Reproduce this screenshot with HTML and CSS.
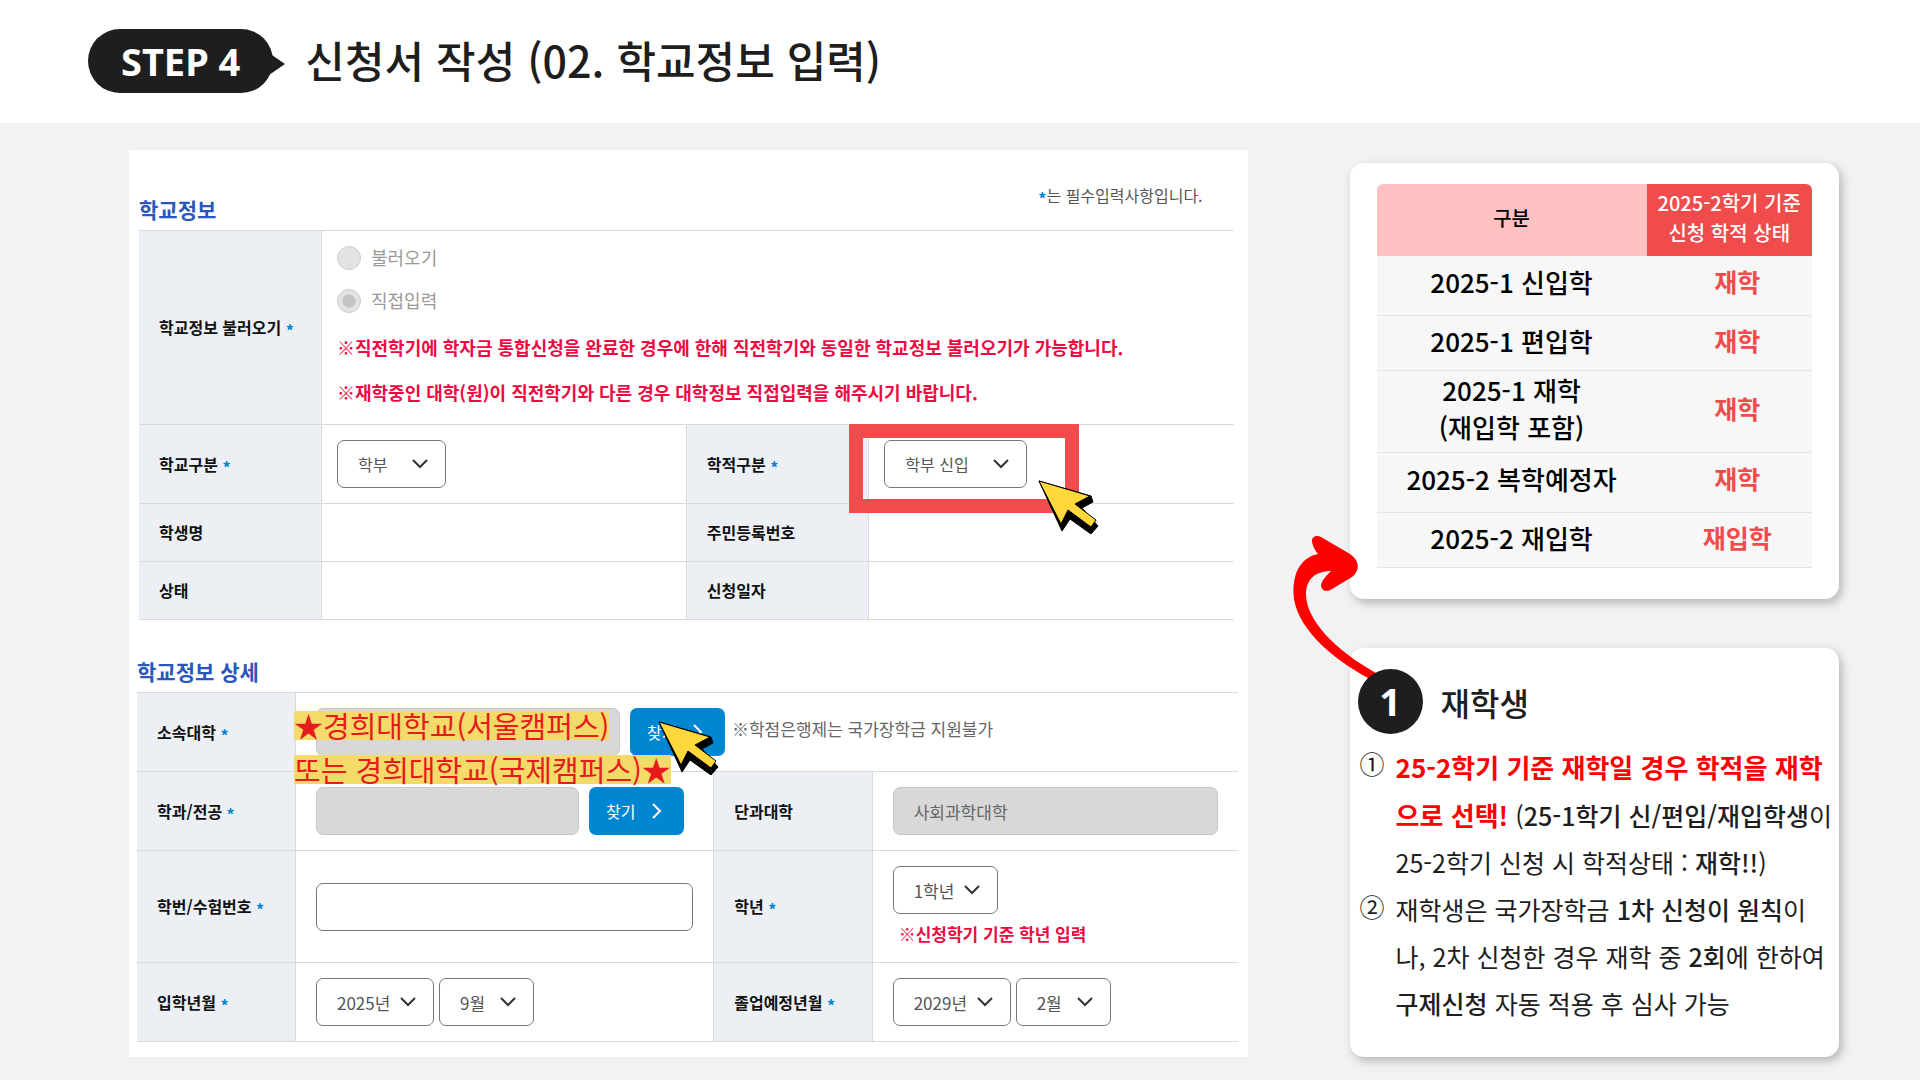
FILE: index.html
```html
<!DOCTYPE html>
<html lang="ko">
<head>
  <meta charset="UTF-8">
  <meta name="viewport" content="width=device-width, initial-scale=1.0">
  <title>신청서 작성 - 학교정보 입력</title>
  <link rel="stylesheet" href="styles.css">
</head>
<body>
  <header class="page-header">
    <span class="step">STEP 4</span>
    <h1>신청서 작성 (02. 학교정보 입력)</h1>
  </header>

  <main class="page-content">
    <form class="panel">
      <section class="school">
        <div class="section-head">
          <h2>학교정보</h2>
          <p class="required-note"><span class="req">*</span>는 필수입력사항입니다.</p>
        </div>
        <table class="form-table">
          <colgroup>
            <col class="col-label"><col class="col-value"><col class="col-label"><col class="col-value">
          </colgroup>
          <tr>
            <th scope="row">학교정보 불러오기 <span class="req">*</span></th>
            <td colspan="3">
              <div class="load-options">
                <label><input type="radio" name="load" disabled>불러오기</label>
                <label><input type="radio" name="load" checked disabled>직접입력</label>
              </div>
              <p class="notice">※직전학기에 학자금 통합신청을 완료한 경우에 한해 직전학기와 동일한 학교정보 불러오기가 가능합니다.</p>
              <p class="notice">※재학중인 대학(원)이 직전학기와 다른 경우 대학정보 직접입력을 해주시기 바랍니다.</p>
            </td>
          </tr>
          <tr>
            <th scope="row"><label for="school-type">학교구분 <span class="req">*</span></label></th>
            <td><select id="school-type" class="w-type"><option>학부</option></select></td>
            <th scope="row"><label for="status-type">학적구분 <span class="req">*</span></label></th>
            <td>
              <div class="marked">
                <select id="status-type" class="w-status"><option>학부 신입</option></select>
                <div class="mark-frame"></div>
                <svg class="cursor" viewBox="-1 -1 62 56" aria-hidden="true">
                  <path d="M0 0L52 15L54 21L43 27L59 45L52 53L31 38L23 50Z" fill="#000" stroke="#000"/>
                  <path d="M0 0L51 15L36 23L57 39L52 46L29 29L22 43Z" fill="#ffd93b" stroke="#000" stroke-width="1"/>
                </svg>
              </div>
            </td>
          </tr>
          <tr>
            <th scope="row">학생명</th>
            <td></td>
            <th scope="row">주민등록번호</th>
            <td></td>
          </tr>
          <tr>
            <th scope="row">상태</th>
            <td></td>
            <th scope="row">신청일자</th>
            <td></td>
          </tr>
        </table>
      </section>

      <section class="detail">
        <div class="section-head">
          <h2>학교정보 상세</h2>
        </div>
        <table class="form-table">
          <colgroup>
            <col class="col-label"><col class="col-value"><col class="col-label"><col class="col-side">
          </colgroup>
          <tr>
            <th scope="row"><label for="univ">소속대학 <span class="req">*</span></label></th>
            <td colspan="3">
              <div class="field-row marked">
                <input type="text" id="univ" class="w-univ" disabled>
                <button type="button">찾기
                  <svg viewBox="0 0 10 16" aria-hidden="true"><path d="M1 1L8 8L1 15"/></svg>
                </button>
                <span class="hint">※학점은행제는 국가장학금 지원불가</span>
                <div class="highlight">
                  <span>★경희대학교(서울캠퍼스)</span>
                  <span>또는 경희대학교(국제캠퍼스)★</span>
                </div>
                <svg class="cursor cursor-find" viewBox="-1 -1 62 56" aria-hidden="true">
                  <path d="M0 0L52 15L54 21L43 27L59 45L52 53L31 38L23 50Z" fill="#000" stroke="#000"/>
                  <path d="M0 0L51 15L36 23L57 39L52 46L29 29L22 43Z" fill="#ffd93b" stroke="#000" stroke-width="1"/>
                </svg>
              </div>
            </td>
          </tr>
          <tr>
            <th scope="row"><label for="major">학과/전공 <span class="req">*</span></label></th>
            <td>
              <div class="field-row">
                <input type="text" id="major" class="w-major" disabled>
                <button type="button">찾기
                  <svg viewBox="0 0 10 16" aria-hidden="true"><path d="M1 1L8 8L1 15"/></svg>
                </button>
              </div>
            </td>
            <th scope="row"><label for="college">단과대학</label></th>
            <td><input type="text" id="college" value="사회과학대학" disabled></td>
          </tr>
          <tr>
            <th scope="row"><label for="student-no">학번/수험번호 <span class="req">*</span></label></th>
            <td><input type="text" id="student-no"></td>
            <th scope="row"><label for="grade">학년 <span class="req">*</span></label></th>
            <td>
              <select id="grade" class="w-grade"><option>1학년</option></select>
              <p class="notice notice-small">※신청학기 기준 학년 입력</p>
            </td>
          </tr>
          <tr>
            <th scope="row"><label for="enter-year">입학년월 <span class="req">*</span></label></th>
            <td>
              <div class="date-row">
                <select id="enter-year" class="w-year"><option>2025년</option></select>
                <select class="w-month" aria-label="입학월"><option>9월</option></select>
              </div>
            </td>
            <th scope="row"><label for="grad-year">졸업예정년월 <span class="req">*</span></label></th>
            <td>
              <div class="date-row">
                <select id="grad-year" class="w-year"><option>2029년</option></select>
                <select class="w-month" aria-label="졸업예정월"><option>2월</option></select>
              </div>
            </td>
          </tr>
        </table>
      </section>
    </form>

    <aside class="guide">
      <div class="card card-status">
        <table class="status-table">
          <thead>
            <tr><th>구분</th><th>2025-2학기 기준<br>신청 학적 상태</th></tr>
          </thead>
          <tbody>
            <tr class="tall"><td>2025-1 신입학</td><td>재학</td></tr>
            <tr><td>2025-1 편입학</td><td>재학</td></tr>
            <tr class="double"><td>2025-1 재학<br>(재입학 포함)</td><td>재학</td></tr>
            <tr class="tall"><td>2025-2 복학예정자</td><td>재학</td></tr>
            <tr><td>2025-2 재입학</td><td>재입학</td></tr>
          </tbody>
        </table>
      </div>

      <div class="card card-guide">
        <svg class="arrow" viewBox="0 0 90 155" aria-hidden="true">
          <path fill="#f00" d="M80 149C40 128 4 95 3.500 63C3 40 13 27 28 24C24 19 22 14 22 11C22 6 27 5 31 7L60 24C69 30 71 40 62 47L42 59C36 63 31 60 31 55C32 50 37 45 41 41C25 41 16 50 16 64C16 90 45 120 86 143Z"/>
        </svg>
        <div class="guide-title">
          <span class="num">1</span>
          <h2>재학생</h2>
        </div>
        <ul>
          <li>
            <span class="marker">①</span>
            <p><strong class="red">25-2학기 기준 재학일 경우 학적을 재학<br>으로 선택!</strong> (<strong>25-1학기 신/편입/재입학생</strong>이<br>25-2학기 신청 시 학적상태 : <strong>재학!!</strong>)</p>
          </li>
          <li>
            <span class="marker">②</span>
            <p>재학생은 국가장학금 <strong>1차 신청이 원칙</strong>이<br>나, 2차 신청한 경우 재학 중 <strong>2회</strong>에 한하여<br><strong>구제신청</strong> 자동 적용 후 심사 가능</p>
          </li>
        </ul>
      </div>
    </aside>
  </main>
</body>
</html>
```
FILE: styles.css
```css
:root {
  --dark: #1e1e1e;
  --red: #f04c4c;
  --notice: #ee0a41;
  --blue: #0085d0;
  --line: #d8dadc;
  --label-bg: #ecf0f5;
}
* {
  box-sizing: border-box;
  margin: 0;
  padding: 0;
}
body {
  font-family: 'Noto Sans CJK KR', sans-serif;
  background: #f1f2f4;
  color: var(--dark);
  min-height: 100vh;
}

/* header */
.page-header {
  display: flex;
  align-items: center;
  gap: 32px;
  background: #fff;
  padding: 29px 88px 30px;
}
.step {
  position: relative;
  background: var(--dark);
  color: #fff;
  border-radius: 32px;
  padding: 0 33px;
  font-family: 'Noto Sans', sans-serif;
  font-size: 38px;
  font-weight: 700;
  line-height: 64px;
}
.step::after {
  content: '';
  position: absolute;
  right: -12px;
  top: 24px;
  border-left: 16px solid var(--dark);
  border-top: 11px solid transparent;
  border-bottom: 11px solid transparent;
}
.page-header h1 {
  padding-bottom: 4px;
  font-size: 43px;
  font-weight: 500;
  line-height: 60px;
}

/* layout */
.page-content {
  display: grid;
  grid-template-columns: minmax(0, 16fr) minmax(0, 7fr);
  column-gap: 102px;
  padding: 27px 81px 24px 129px;
}
.panel {
  background: #fff;
  padding-bottom: 15px;
}
.school {
  padding: 33px 14px 0 10px;
}
.detail {
  padding: 35px 10px 0 8px;
}

/* form */
.section-head {
  display: flex;
  justify-content: space-between;
  align-items: flex-start;
  padding: 0 31px 5px 0;
}
.section-head h2 {
  color: #2a57bb;
  font-size: 21px;
  font-weight: 700;
  line-height: 32px;
}
.school .section-head h2 {
  margin-top: 10px;
}
.required-note {
  font-size: 16px;
  line-height: 24px;
  color: #555;
}
.req {
  color: var(--blue);
  font-weight: 700;
  line-height: 0;
  vertical-align: -3px;
}
.form-table {
  width: 100%;
  table-layout: fixed;
  border-collapse: collapse;
  line-height: 27px;
}
.form-table th,
.form-table td {
  border-top: 1px solid var(--line);
  border-bottom: 1px solid var(--line);
  padding: 15px 20px;
  text-align: left;
}
.form-table th {
  background: var(--label-bg);
  border-right: 1px solid var(--line);
  color: #111;
  font-size: 16px;
  font-weight: 700;
  white-space: nowrap;
}
.form-table td + th {
  border-left: 1px solid var(--line);
}
.school td {
  padding: 15px;
}
.school tr:first-child td {
  padding: 13px 15px 18px;
}
.school .col-label {
  width: 16.67%;
}
.detail .col-label {
  width: 14.4%;
}
.detail .col-value {
  width: 38%;
}
.load-options {
  display: flex;
  flex-direction: column;
  gap: 16px;
  padding-bottom: 2px;
}
.load-options label {
  display: flex;
  align-items: center;
  gap: 10px;
  color: #999;
  font-size: 18px;
}
input[type="radio"] {
  appearance: none;
  width: 24px;
  height: 24px;
  border: 1px solid #ccc;
  border-radius: 50%;
  background: #e3e3e3;
}
input[type="radio"]:checked {
  background: radial-gradient(circle, #c4c4c4 6px, #e3e3e3 7px);
}
.notice {
  color: var(--notice);
  font-size: 18px;
  font-weight: 700;
  margin-top: 18px;
  white-space: nowrap;
}
.notice-small {
  font-size: 17px;
  margin: 6px 0 0 6px;
}
select,
input[type="text"] {
  display: block;
  height: 48px;
  border: 1px solid #777;
  border-radius: 7px;
  background: #fff;
  color: #555;
  font-family: inherit;
  font-size: 16px;
  padding: 0 20px;
}
.detail select,
.detail input[type="text"] {
  font-size: 17px;
}
input[type="text"] {
  width: 100%;
}
input[type="text"]:disabled {
  background: #d8d8d8;
  border-color: #c8c8c8;
  color: #666;
}
select {
  appearance: none;
  background: #fff url("data:image/svg+xml,%3Csvg xmlns='http://www.w3.org/2000/svg' width='16' height='10' fill='none' stroke='%23333' stroke-width='2'%3E%3Cpath d='M1 1l7 7 7-7'/%3E%3C/svg%3E") no-repeat right 17px center;
}
.w-type { width: 109px; }
.w-status { width: 143px; }
.w-grade { width: 105px; }
.w-year { width: 118px; }
.w-month { width: 95px; }
input.w-univ { width: 304px; }
input.w-major { width: 263px; }
.field-row {
  display: flex;
  align-items: center;
}
.date-row {
  display: flex;
  gap: 5px;
}
.field-row button {
  display: flex;
  align-items: center;
  gap: 17px;
  width: 95px;
  height: 48px;
  margin-left: 10px;
  padding-left: 17px;
  border: none;
  border-radius: 7px;
  background: var(--blue);
  color: #fff;
  font-family: inherit;
  font-size: 16px;
  cursor: pointer;
}
.field-row button svg {
  width: 10px;
  height: 16px;
  fill: none;
  stroke: #fff;
  stroke-width: 2;
}
.hint {
  margin-left: 7px;
  padding-bottom: 8px;
  color: #666;
  font-size: 17px;
}

/* marks over the form */
.marked {
  position: relative;
}
.mark-frame {
  position: absolute;
  left: -35px;
  top: -16px;
  width: 230px;
  height: 89px;
  border: 14px solid var(--red);
  pointer-events: none;
}
.cursor {
  position: absolute;
  left: 154px;
  top: 40px;
  width: 62px;
  height: 56px;
  pointer-events: none;
}
.cursor-find {
  left: 342px;
  top: 13px;
}
.highlight {
  position: absolute;
  left: -22px;
  top: 3px;
  display: flex;
  flex-direction: column;
  align-items: flex-start;
  gap: 15px;
  color: #e61c1c;
  font-size: 29px;
  line-height: 29px;
  white-space: nowrap;
  pointer-events: none;
}
.highlight span {
  background: #f3da69;
}

/* right side */
.guide {
  display: flex;
  flex-direction: column;
  gap: 49px;
  padding-top: 13px;
}
.card {
  background: #fff;
  border-radius: 14px;
  box-shadow: 3px 4px 10px rgba(0,0,0,0.25);
}
.card-status {
  padding: 21px 27px 31px;
}
.status-table {
  width: 100%;
  border-collapse: separate;
  border-spacing: 0;
  border-radius: 6px 6px 0 0;
  overflow: hidden;
  text-align: center;
}
.status-table th {
  width: 62%;
  background: #ffc1c1;
  color: #000;
  font-size: 20px;
  font-weight: 500;
  line-height: 30px;
  padding: 4px 0 8px;
}
.status-table th:last-child {
  width: 38%;
  background: var(--red);
  color: #fff;
  white-space: nowrap;
}
.status-table td {
  background: #f7f7f7;
  border-bottom: 1px solid #e4e4e4;
  color: #000;
  font-size: 26px;
  font-weight: 500;
  line-height: 37px;
  padding-top: 6px;
  padding-bottom: 11px;
}
.status-table .tall td {
  padding-top: 7px;
  padding-bottom: 15px;
}
.status-table .double td {
  padding-top: 0;
  padding-bottom: 7px;
}
.status-table td:last-child {
  color: var(--red);
  font-size: 25px;
  font-weight: 700;
  padding-left: 16px;
}
.card-guide {
  position: relative;
  flex: 1;
  padding: 21px 0 24px 8px;
}
.arrow {
  position: absolute;
  left: -60px;
  top: -118px;
  width: 90px;
  height: 155px;
}
.guide-title {
  position: relative;
  display: flex;
  align-items: center;
  gap: 18px;
  margin-bottom: 9px;
}
.guide-title h2 {
  font-size: 32px;
  font-weight: 500;
  line-height: 48px;
}
.num {
  width: 65px;
  height: 65px;
  border-radius: 50%;
  background: var(--dark);
  color: #fff;
  font-family: 'Noto Sans', sans-serif;
  font-size: 38px;
  font-weight: 700;
  line-height: 65px;
  text-align: center;
}
.card-guide ul {
  list-style: none;
  padding-left: 2px;
  font-size: 25px;
  line-height: 47px;
}
.card-guide li {
  display: flex;
  gap: 11px;
  white-space: nowrap;
}
.marker {
  line-height: 40px;
}
.card-guide strong {
  font-weight: 500;
}
.card-guide .red {
  color: #f00;
  font-size: 26px;
  font-weight: 700;
}
```
